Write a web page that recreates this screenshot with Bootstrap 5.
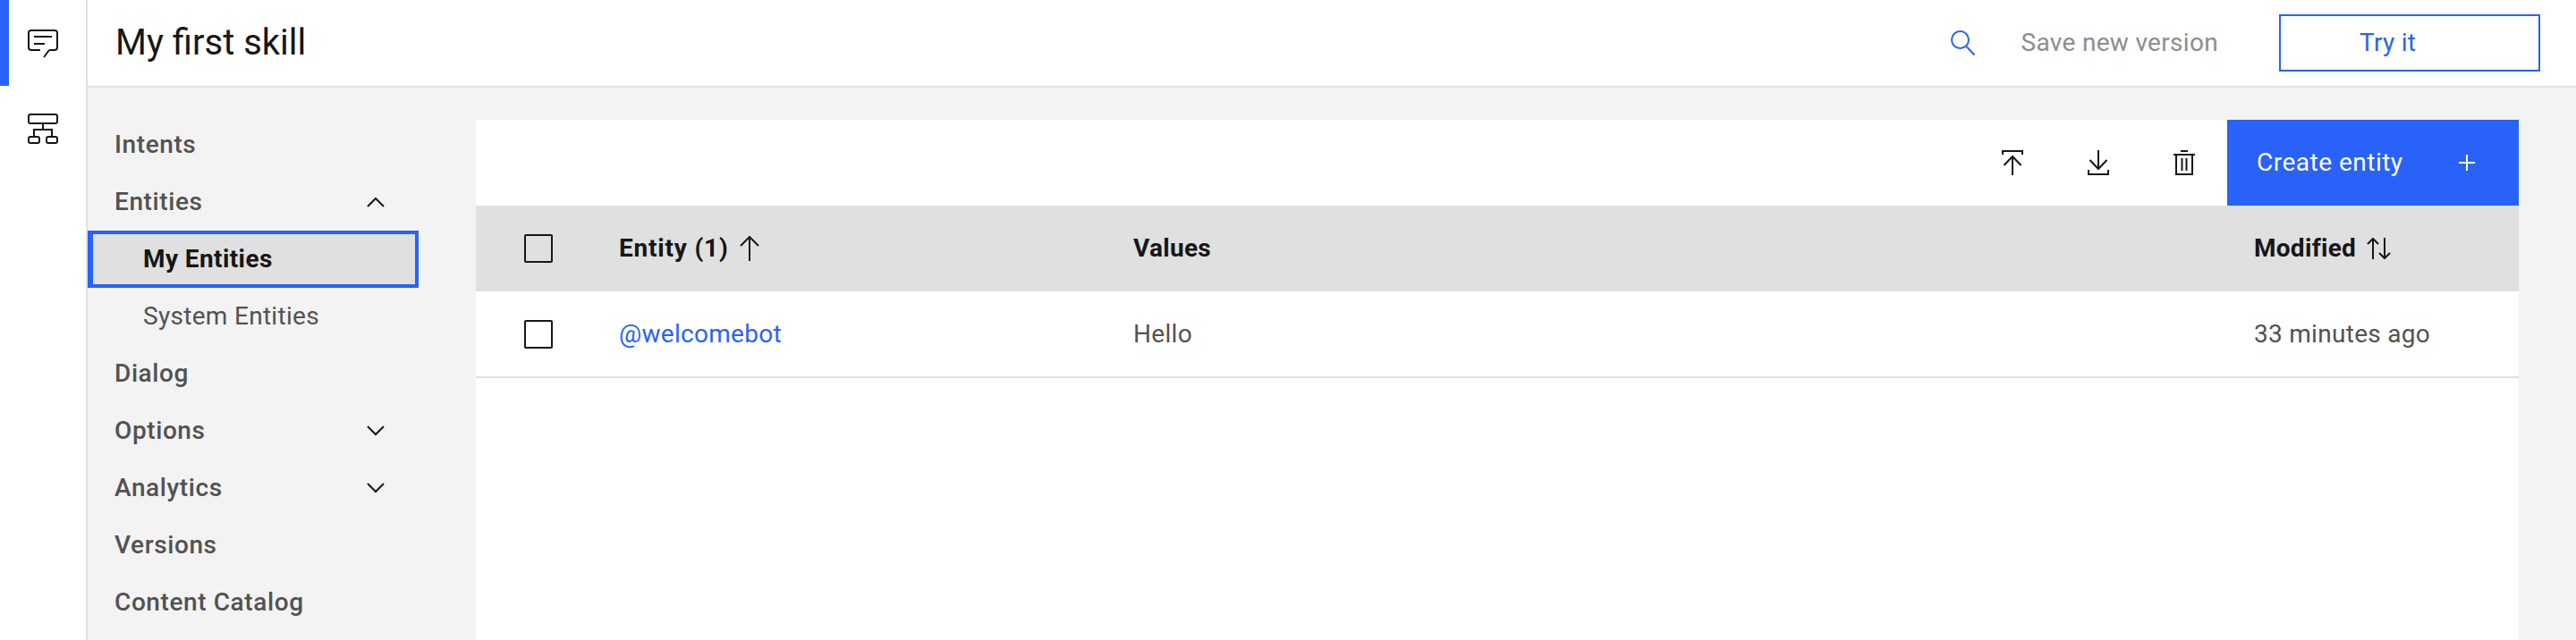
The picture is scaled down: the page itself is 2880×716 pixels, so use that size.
<!DOCTYPE html>
<html lang="en">
<head>
  <meta charset="UTF-8">
  <title>My first skill</title>
  <link href="https://cdn.jsdelivr.net/npm/bootstrap@5.3.0/dist/css/bootstrap.min.css" rel="stylesheet">
  <style>
    html, body { height: 716px; overflow: hidden; }
    body { font-family: Roboto, "Liberation Sans", sans-serif; font-size: 28px; letter-spacing: .3px; color: #525252; background: #f3f3f3; }
    svg { display: block; fill: none; stroke-width: 2; }

    /* left icon rail */
    .rail { width: 98px; background: #fff; border-right: 2px solid #e0e0e0; }
    .rail-item { width: 96px; height: 96px; position: relative; stroke: #161616; }
    .rail-item.is-on::before { content: ""; position: absolute; left: 0; top: 0; width: 10px; height: 96px; background: #2962f9; }

    /* top bar */
    .topbar { height: 98px; background: #fff; border-bottom: 2px solid #e0e0e0; padding: 0 40px 0 31px; }
    .skill-name { font-size: 40px; color: #161616; font-weight: 400; letter-spacing: 0; margin: 0; }
    .save-link { color: #8d8d8d; margin: 0 68px 0 52px; }
    .try-btn { width: 292px; height: 64px; border: 2px solid #2962f9; border-radius: 0; color: #2962f9; font-size: 28px; letter-spacing: .3px; padding: 0 0 0 88px; text-align: left; }

    /* side nav */
    .side-nav { width: 434px; padding-top: 32px; }
    .nav-row { width: 370px; height: 64px; padding: 0 38px 0 30px; font-weight: 500; letter-spacing: .6px; color: #525252; }
    .nav-row svg { stroke: #161616; }
    .nav-row.sub { padding-left: 62px; font-weight: 400; letter-spacing: .3px; }
    .nav-row.is-current { background: #e0e0e0; border: 4px solid #2962f9; border-left-width: 6px; padding-left: 56px; font-weight: 700; letter-spacing: .4px; color: #161616; }

    /* entity panel */
    .panel-wrap { padding: 36px 64px 0 0; }
    .panel { background: #fff; height: 100%; }
    .tool-row { height: 96px; }
    .tool-btn { stroke: #161616; margin-right: 72px; width: 24px; }
    .tool-row .tool-btn:first-child { margin-left: auto; }
    .tool-btn.last { margin-right: 36px; }
    .create-btn { width: 326px; height: 96px; background: #2962f9; color: #fff; font-size: 28px; letter-spacing: .5px; border: 0; border-radius: 0; padding: 0 49px 0 33px; }
    .create-btn svg { stroke: #fff; }

    .entity-table { table-layout: fixed; width: 100%; margin: 0; font-size: 28px; }
    .entity-table th, .entity-table td { padding: 0; vertical-align: middle; border: 0; }
    .entity-table thead th { --bs-table-bg: #e0e0e0; height: 96px; color: #161616; font-weight: 700; }
    .entity-table tbody td { height: 96px; color: #525252; border-bottom: 2px solid #e0e0e0; }
    .col-check { width: 160px; }
    .col-name { width: 575px; }
    .col-mod { width: 296px; }
    .tick-box { width: 32px; height: 32px; margin-left: 54px; border: 2px solid #161616; border-radius: 2px; }
    .entity-link { color: #2962f9; text-decoration: none; }
    .entity-count { letter-spacing: .8px; }
    .sort-cell { gap: 12px; }
    .sort-icon { stroke: #161616; }
  </style>
</head>
<body class="d-flex">
  <!-- icon rail -->
  <div class="rail flex-shrink-0">
    <div class="rail-item is-on d-flex align-items-center justify-content-center">
      <svg width="36" height="36" viewBox="0 0 36 36">
        <path d="M25 26h6a3 3 0 0 0 3-3V7a3 3 0 0 0-3-3H5a3 3 0 0 0-3 3v16a3 3 0 0 0 3 3h10"/>
        <path d="M25 26l-6 8M8 11h20M8 19h12"/>
      </svg>
    </div>
    <div class="rail-item d-flex align-items-center justify-content-center">
      <svg width="36" height="36" viewBox="0 0 36 36">
        <rect x="2" y="2" width="32" height="10" rx="2"/>
        <rect x="2" y="27" width="12" height="7" rx="2"/>
        <rect x="22" y="27" width="12" height="7" rx="2"/>
        <path d="M18 12v7M8 27v-8h20v8"/>
      </svg>
    </div>
  </div>

  <div class="flex-grow-1 d-flex flex-column">
    <!-- top bar -->
    <div class="topbar d-flex align-items-center flex-shrink-0">
      <h1 class="skill-name me-auto">My first skill</h1>
      <svg width="28" height="28" viewBox="0 0 28 28" stroke="#2962f9">
        <circle cx="11.500" cy="10.500" r="9.500"/>
        <path d="M18.500 18l9 9.500"/>
      </svg>
      <span class="save-link">Save new version</span>
      <button type="button" class="btn try-btn">Try it</button>
    </div>

    <div class="flex-grow-1 d-flex">
      <!-- side nav -->
      <div class="side-nav flex-shrink-0">
        <div class="nav-row d-flex align-items-center">Intents</div>
        <div class="nav-row d-flex align-items-center justify-content-between">Entities
          <svg width="20" height="12" viewBox="0 0 20 12"><path d="M1 11l9-9 9 9"/></svg>
        </div>
        <div class="nav-row sub is-current d-flex align-items-center">My Entities</div>
        <div class="nav-row sub d-flex align-items-center">System Entities</div>
        <div class="nav-row d-flex align-items-center">Dialog</div>
        <div class="nav-row d-flex align-items-center justify-content-between">Options
          <svg width="20" height="12" viewBox="0 0 20 12"><path d="M1 1l9 9 9-9"/></svg>
        </div>
        <div class="nav-row d-flex align-items-center justify-content-between">Analytics
          <svg width="20" height="12" viewBox="0 0 20 12"><path d="M1 1l9 9 9-9"/></svg>
        </div>
        <div class="nav-row d-flex align-items-center">Versions</div>
        <div class="nav-row d-flex align-items-center">Content Catalog</div>
      </div>

      <!-- entities -->
      <div class="panel-wrap flex-grow-1">
        <div class="panel">
          <div class="tool-row d-flex align-items-center">
            <div class="tool-btn">
              <svg width="24" height="28" viewBox="0 0 24 28"><path d="M1 5V1h22v4M12 7v21M2.500 17L12 7l9.500 10"/></svg>
            </div>
            <div class="tool-btn">
              <svg width="24" height="28" viewBox="0 0 24 28"><path d="M1 22v5h22v-5M12 0v21M2.500 11L12 21l9.500-10"/></svg>
            </div>
            <div class="tool-btn last">
              <svg width="24" height="28" viewBox="0 0 24 28"><path d="M8 1h8M0 5h24M3 5v22h18V5M9.500 9v14M14.500 9v14"/></svg>
            </div>
            <button type="button" class="btn create-btn d-flex align-items-center justify-content-between">Create entity
              <svg width="18" height="18" viewBox="0 0 18 18"><path d="M9 0v18M0 9h18"/></svg>
            </button>
          </div>
          <table class="table entity-table">
            <thead>
              <tr>
                <th class="col-check"><div class="tick-box"></div></th>
                <th class="col-name">
                  <span class="sort-cell d-flex align-items-center"><span class="entity-count">Entity (1)</span>
                    <svg class="sort-icon" width="22" height="28" viewBox="0 0 22 28"><path d="M11 1v27M1 11L11 1l10 10"/></svg>
                  </span>
                </th>
                <th>Values</th>
                <th class="col-mod">
                  <span class="sort-cell d-flex align-items-center">Modified
                    <svg class="sort-icon" width="27" height="24" viewBox="0 0 27 24"><path d="M7 1v23M1 7l6-6 6 6M20 0v23M14 17l6 6 6-6"/></svg>
                  </span>
                </th>
              </tr>
            </thead>
            <tbody>
              <tr>
                <td><div class="tick-box"></div></td>
                <td><a class="entity-link" href="#">@welcomebot</a></td>
                <td>Hello</td>
                <td>33 minutes ago</td>
              </tr>
            </tbody>
          </table>
        </div>
      </div>
    </div>
  </div>
  <script src="https://cdn.jsdelivr.net/npm/bootstrap@5.3.0/dist/js/bootstrap.bundle.min.js"></script>
</body>
</html>
